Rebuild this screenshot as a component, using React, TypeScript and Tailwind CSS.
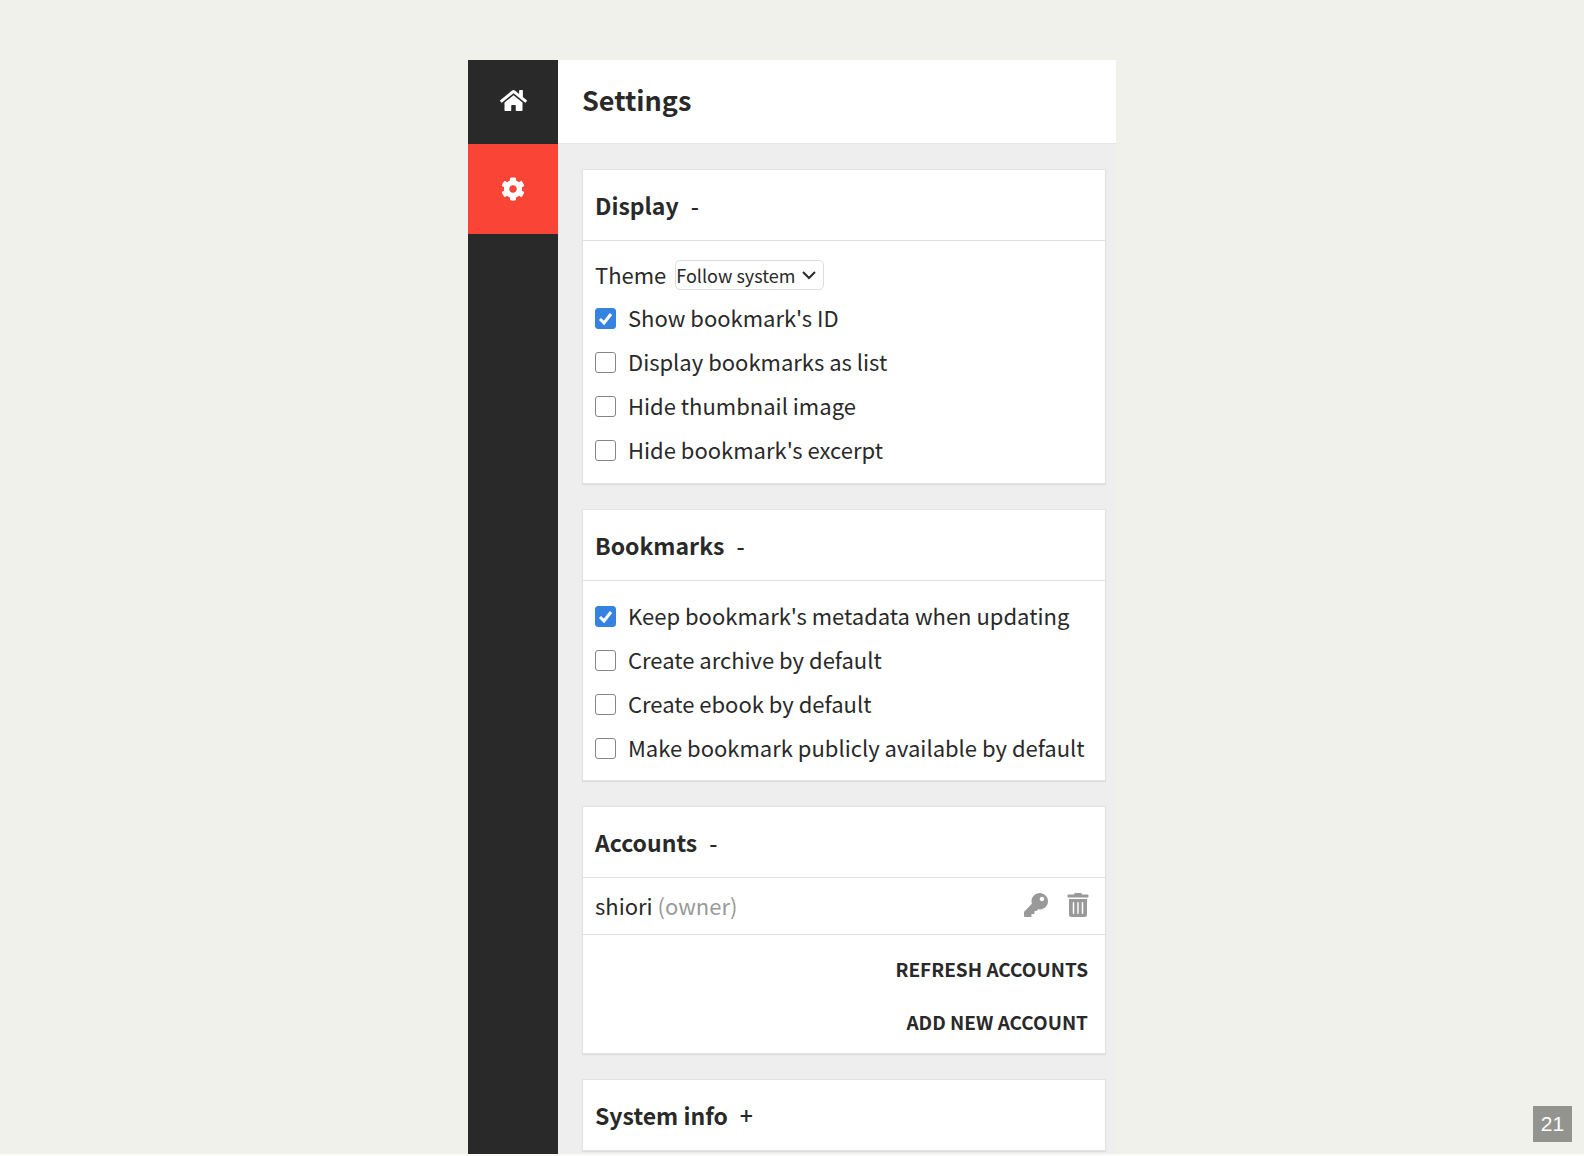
import { useState } from "react"
import type { ReactNode } from "react"
import { FaCog, FaHome, FaKey, FaTrashAlt } from "react-icons/fa"

type Option = {
  id: string
  label: string
  checked: boolean
}

const displayOptions: Option[] = [
  { id: "show-id", label: "Show bookmark's ID", checked: true },
  { id: "list-mode", label: "Display bookmarks as list", checked: false },
  { id: "hide-thumbnail", label: "Hide thumbnail image", checked: false },
  { id: "hide-excerpt", label: "Hide bookmark's excerpt", checked: false },
]

const bookmarkOptions: Option[] = [
  { id: "keep-metadata", label: "Keep bookmark's metadata when updating", checked: true },
  { id: "create-archive", label: "Create archive by default", checked: false },
  { id: "create-ebook", label: "Create ebook by default", checked: false },
  { id: "make-public", label: "Make bookmark publicly available by default", checked: false },
]

function Sidebar() {
  return (
    <nav className="flex w-[90px] shrink-0 flex-col bg-[#292929] text-white">
      <a href="#home" aria-label="Home" className="flex h-[84px] items-center justify-center pb-1">
        <FaHome className="size-[27px]" />
      </a>
      <a href="#settings" aria-label="Settings" className="flex h-[90px] items-center justify-center bg-[#f94436]">
        <FaCog className="size-6" />
      </a>
    </nav>
  )
}

function Section({ title, defaultOpen = true, children }: { title: string; defaultOpen?: boolean; children?: ReactNode }) {
  const [open, setOpen] = useState(defaultOpen)

  return (
    <section className="border border-[#e2e2e2] bg-white shadow-[0_1px_1px_#dddddd]">
      <h2>
        <button
          type="button"
          aria-expanded={open}
          onClick={() => setOpen(!open)}
          className="flex h-[70px] w-full items-center gap-3 px-3 text-left text-[23px] font-bold"
        >
          <span>{title}</span>
          <span className="font-medium">{open ? "-" : "+"}</span>
        </button>
      </h2>
      {open && children && <div className="border-t border-[#e0e0e0]">{children}</div>}
    </section>
  )
}

function CheckRow({ option }: { option: Option }) {
  const [checked, setChecked] = useState(option.checked)

  return (
    <label htmlFor={option.id} className="flex h-11 items-center gap-3">
      <span className="relative flex size-[21px] shrink-0">
        <input
          id={option.id}
          type="checkbox"
          checked={checked}
          onChange={(e) => setChecked(e.target.checked)}
          className="peer size-[21px] appearance-none rounded-[3px] border border-[#858585] bg-white checked:border-[#3682e0] checked:bg-[#3682e0]"
        />
        <svg
          viewBox="0 0 21 21"
          className="pointer-events-none absolute inset-0 hidden fill-none stroke-white stroke-3 peer-checked:block"
        >
          <path d="M5 11 L9 15 L16 6" />
        </svg>
      </span>
      <span className="pb-0.5">{option.label}</span>
    </label>
  )
}

export default function App() {
  return (
    <div className="flex min-h-screen flex-col border-b-2 border-[#fafaf7] bg-[#f0f1eb] pt-[60px] font-['Noto_Sans_CJK_SC',sans-serif] text-[22px] leading-7 text-[#292929]">
      <div className="mx-auto flex w-full max-w-[648px] flex-1">
        <Sidebar />
        <main className="flex min-w-0 flex-1 flex-col bg-[#eeeeee]">
          <header className="flex h-[84px] items-center border-b border-[#e5e5e5] bg-white px-6 pb-1">
            <h1 className="text-[27px] font-bold">Settings</h1>
          </header>

          <div className="flex flex-col gap-[25px] pt-[25px] pr-[10px] pb-[3px] pl-6">
            <Section title="Display">
              <div className="px-3 pt-[13px] pb-[11px]">
                <div className="flex h-[42px] items-center gap-[9px]">
                  <label htmlFor="theme" className="pb-0.5">Theme</label>
                  <div className="relative flex items-center">
                    <select
                      id="theme"
                      className="h-[30px] w-[149px] appearance-none rounded-[5px] border border-[#dddddd] bg-white text-lg leading-7"
                    >
                      <option>Follow system</option>
                      <option>Light theme</option>
                      <option>Dark theme</option>
                    </select>
                    <svg
                      viewBox="0 0 14 10"
                      className="pointer-events-none absolute right-2 h-[10px] w-[14px] fill-none stroke-[#292929] stroke-2"
                    >
                      <path d="M1 2 L7 8 L13 2" />
                    </svg>
                  </div>
                </div>
                {displayOptions.map((option) => (
                  <CheckRow key={option.id} option={option} />
                ))}
              </div>
            </Section>

            <Section title="Bookmarks">
              <div className="px-3 pt-[13px] pb-[10px]">
                {bookmarkOptions.map((option) => (
                  <CheckRow key={option.id} option={option} />
                ))}
              </div>
            </Section>

            <Section title="Accounts">
              <ul>
                <li className="flex h-[57px] items-center border-b border-[#e0e0e0] pr-[15px] pb-0.5 pl-3">
                  <p className="flex-1">
                    shiori <span className="text-[#999999]">(owner)</span>
                  </p>
                  <div className="flex gap-[18px] text-[#999999]">
                    <button type="button" aria-label="Change password">
                      <FaKey className="size-6" />
                    </button>
                    <button type="button" aria-label="Delete account">
                      <FaTrashAlt className="size-6" />
                    </button>
                  </div>
                </li>
              </ul>
              <div className="flex flex-col items-end pt-[7px] pr-[17px] pb-[5px] text-[19px] font-bold">
                <button type="button" className="h-[53px] uppercase">Refresh accounts</button>
                <button type="button" className="h-[53px] uppercase">Add new account</button>
              </div>
            </Section>

            <Section title="System info" defaultOpen={false} />
          </div>
        </main>
      </div>

      {/* Page number */}
      <div className="fixed right-3 bottom-[14px] flex h-9 w-[39px] items-center justify-center bg-[#93948f] font-['Liberation_Sans',sans-serif] text-[21px] text-white">
        21
      </div>
    </div>
  )
}
